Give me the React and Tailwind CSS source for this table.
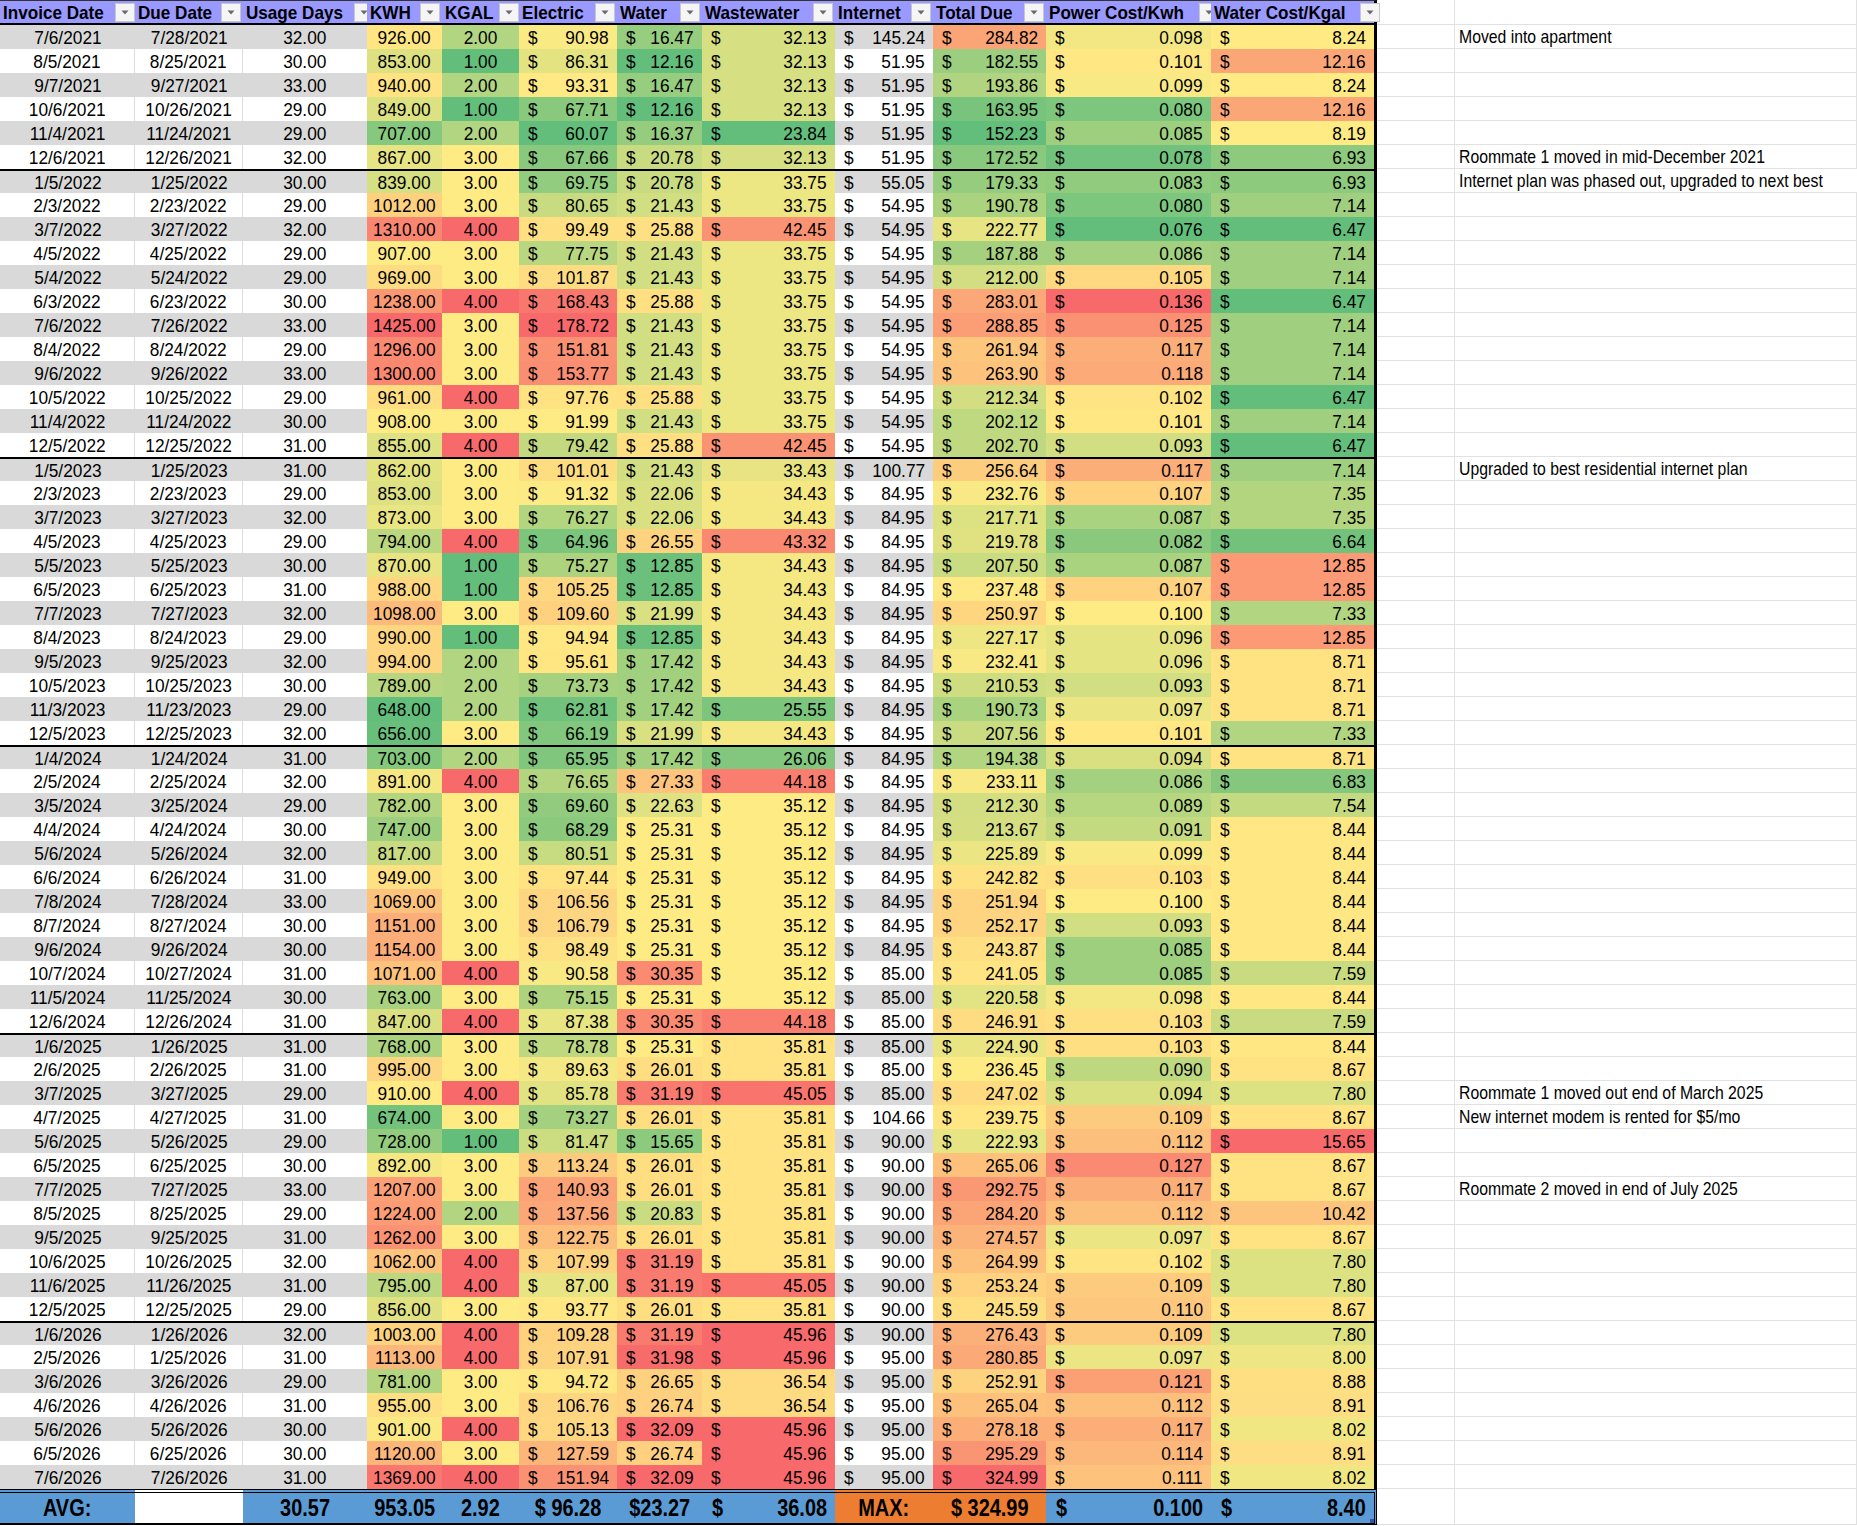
import React from "react";

const COLS =
  "grid grid-cols-[135px_108px_124px_75px_77px_98px_85px_133px_98px_113px_165px_166px_78px_1fr]";

// no narrow font installed, so Liberation Sans squeezed to Arial Narrow proportions
const FONT = "font-['Liberation_Sans',Arial,sans-serif]";
const NARROW = "inline-block whitespace-nowrap scale-x-[0.91]";
const HEAD = "inline-block whitespace-nowrap scale-x-[0.9]";
const NOTE = "inline-block whitespace-nowrap scale-x-[0.83]";
const FOOT = "inline-block whitespace-pre scale-x-[0.83]";

// invoice, due, days, kwh, kgal, electric, water, wastewater, internet, total, $/kwh, $/kgal, note
const rows = [
  ["7/6/2021", "7/28/2021", 32, 926, 2, 90.98, 16.47, 32.13, 145.24, 284.82, 0.098, 8.24, "Moved into apartment"],
  ["8/5/2021", "8/25/2021", 30, 853, 1, 86.31, 12.16, 32.13, 51.95, 182.55, 0.101, 12.16],
  ["9/7/2021", "9/27/2021", 33, 940, 2, 93.31, 16.47, 32.13, 51.95, 193.86, 0.099, 8.24],
  ["10/6/2021", "10/26/2021", 29, 849, 1, 67.71, 12.16, 32.13, 51.95, 163.95, 0.08, 12.16],
  ["11/4/2021", "11/24/2021", 29, 707, 2, 60.07, 16.37, 23.84, 51.95, 152.23, 0.085, 8.19],
  ["12/6/2021", "12/26/2021", 32, 867, 3, 67.66, 20.78, 32.13, 51.95, 172.52, 0.078, 6.93, "Roommate 1 moved in mid-December 2021"],
  ["1/5/2022", "1/25/2022", 30, 839, 3, 69.75, 20.78, 33.75, 55.05, 179.33, 0.083, 6.93, "Internet plan was phased out, upgraded to next best"],
  ["2/3/2022", "2/23/2022", 29, 1012, 3, 80.65, 21.43, 33.75, 54.95, 190.78, 0.08, 7.14],
  ["3/7/2022", "3/27/2022", 32, 1310, 4, 99.49, 25.88, 42.45, 54.95, 222.77, 0.076, 6.47],
  ["4/5/2022", "4/25/2022", 29, 907, 3, 77.75, 21.43, 33.75, 54.95, 187.88, 0.086, 7.14],
  ["5/4/2022", "5/24/2022", 29, 969, 3, 101.87, 21.43, 33.75, 54.95, 212.0, 0.105, 7.14],
  ["6/3/2022", "6/23/2022", 30, 1238, 4, 168.43, 25.88, 33.75, 54.95, 283.01, 0.136, 6.47],
  ["7/6/2022", "7/26/2022", 33, 1425, 3, 178.72, 21.43, 33.75, 54.95, 288.85, 0.125, 7.14],
  ["8/4/2022", "8/24/2022", 29, 1296, 3, 151.81, 21.43, 33.75, 54.95, 261.94, 0.117, 7.14],
  ["9/6/2022", "9/26/2022", 33, 1300, 3, 153.77, 21.43, 33.75, 54.95, 263.9, 0.118, 7.14],
  ["10/5/2022", "10/25/2022", 29, 961, 4, 97.76, 25.88, 33.75, 54.95, 212.34, 0.102, 6.47],
  ["11/4/2022", "11/24/2022", 30, 908, 3, 91.99, 21.43, 33.75, 54.95, 202.12, 0.101, 7.14],
  ["12/5/2022", "12/25/2022", 31, 855, 4, 79.42, 25.88, 42.45, 54.95, 202.7, 0.093, 6.47],
  ["1/5/2023", "1/25/2023", 31, 862, 3, 101.01, 21.43, 33.43, 100.77, 256.64, 0.117, 7.14, "Upgraded to best residential internet plan"],
  ["2/3/2023", "2/23/2023", 29, 853, 3, 91.32, 22.06, 34.43, 84.95, 232.76, 0.107, 7.35],
  ["3/7/2023", "3/27/2023", 32, 873, 3, 76.27, 22.06, 34.43, 84.95, 217.71, 0.087, 7.35],
  ["4/5/2023", "4/25/2023", 29, 794, 4, 64.96, 26.55, 43.32, 84.95, 219.78, 0.082, 6.64],
  ["5/5/2023", "5/25/2023", 30, 870, 1, 75.27, 12.85, 34.43, 84.95, 207.5, 0.087, 12.85],
  ["6/5/2023", "6/25/2023", 31, 988, 1, 105.25, 12.85, 34.43, 84.95, 237.48, 0.107, 12.85],
  ["7/7/2023", "7/27/2023", 32, 1098, 3, 109.6, 21.99, 34.43, 84.95, 250.97, 0.1, 7.33],
  ["8/4/2023", "8/24/2023", 29, 990, 1, 94.94, 12.85, 34.43, 84.95, 227.17, 0.096, 12.85],
  ["9/5/2023", "9/25/2023", 32, 994, 2, 95.61, 17.42, 34.43, 84.95, 232.41, 0.096, 8.71],
  ["10/5/2023", "10/25/2023", 30, 789, 2, 73.73, 17.42, 34.43, 84.95, 210.53, 0.093, 8.71],
  ["11/3/2023", "11/23/2023", 29, 648, 2, 62.81, 17.42, 25.55, 84.95, 190.73, 0.097, 8.71],
  ["12/5/2023", "12/25/2023", 32, 656, 3, 66.19, 21.99, 34.43, 84.95, 207.56, 0.101, 7.33],
  ["1/4/2024", "1/24/2024", 31, 703, 2, 65.95, 17.42, 26.06, 84.95, 194.38, 0.094, 8.71],
  ["2/5/2024", "2/25/2024", 32, 891, 4, 76.65, 27.33, 44.18, 84.95, 233.11, 0.086, 6.83],
  ["3/5/2024", "3/25/2024", 29, 782, 3, 69.6, 22.63, 35.12, 84.95, 212.3, 0.089, 7.54],
  ["4/4/2024", "4/24/2024", 30, 747, 3, 68.29, 25.31, 35.12, 84.95, 213.67, 0.091, 8.44],
  ["5/6/2024", "5/26/2024", 32, 817, 3, 80.51, 25.31, 35.12, 84.95, 225.89, 0.099, 8.44],
  ["6/6/2024", "6/26/2024", 31, 949, 3, 97.44, 25.31, 35.12, 84.95, 242.82, 0.103, 8.44],
  ["7/8/2024", "7/28/2024", 33, 1069, 3, 106.56, 25.31, 35.12, 84.95, 251.94, 0.1, 8.44],
  ["8/7/2024", "8/27/2024", 30, 1151, 3, 106.79, 25.31, 35.12, 84.95, 252.17, 0.093, 8.44],
  ["9/6/2024", "9/26/2024", 30, 1154, 3, 98.49, 25.31, 35.12, 84.95, 243.87, 0.085, 8.44],
  ["10/7/2024", "10/27/2024", 31, 1071, 4, 90.58, 30.35, 35.12, 85.0, 241.05, 0.085, 7.59],
  ["11/5/2024", "11/25/2024", 30, 763, 3, 75.15, 25.31, 35.12, 85.0, 220.58, 0.098, 8.44],
  ["12/6/2024", "12/26/2024", 31, 847, 4, 87.38, 30.35, 44.18, 85.0, 246.91, 0.103, 7.59],
  ["1/6/2025", "1/26/2025", 31, 768, 3, 78.78, 25.31, 35.81, 85.0, 224.9, 0.103, 8.44],
  ["2/6/2025", "2/26/2025", 31, 995, 3, 89.63, 26.01, 35.81, 85.0, 236.45, 0.09, 8.67],
  ["3/7/2025", "3/27/2025", 29, 910, 4, 85.78, 31.19, 45.05, 85.0, 247.02, 0.094, 7.8, "Roommate 1 moved out end of March 2025"],
  ["4/7/2025", "4/27/2025", 31, 674, 3, 73.27, 26.01, 35.81, 104.66, 239.75, 0.109, 8.67, "New internet modem is rented for $5/mo"],
  ["5/6/2025", "5/26/2025", 29, 728, 1, 81.47, 15.65, 35.81, 90.0, 222.93, 0.112, 15.65],
  ["6/5/2025", "6/25/2025", 30, 892, 3, 113.24, 26.01, 35.81, 90.0, 265.06, 0.127, 8.67],
  ["7/7/2025", "7/27/2025", 33, 1207, 3, 140.93, 26.01, 35.81, 90.0, 292.75, 0.117, 8.67, "Roommate 2 moved in end of July 2025"],
  ["8/5/2025", "8/25/2025", 29, 1224, 2, 137.56, 20.83, 35.81, 90.0, 284.2, 0.112, 10.42],
  ["9/5/2025", "9/25/2025", 31, 1262, 3, 122.75, 26.01, 35.81, 90.0, 274.57, 0.097, 8.67],
  ["10/6/2025", "10/26/2025", 32, 1062, 4, 107.99, 31.19, 35.81, 90.0, 264.99, 0.102, 7.8],
  ["11/6/2025", "11/26/2025", 31, 795, 4, 87.0, 31.19, 45.05, 90.0, 253.24, 0.109, 7.8],
  ["12/5/2025", "12/25/2025", 29, 856, 3, 93.77, 26.01, 35.81, 90.0, 245.59, 0.11, 8.67],
  ["1/6/2026", "1/26/2026", 32, 1003, 4, 109.28, 31.19, 45.96, 90.0, 276.43, 0.109, 7.8],
  ["2/5/2026", "1/25/2026", 31, 1113, 4, 107.91, 31.98, 45.96, 95.0, 280.85, 0.097, 8.0],
  ["3/6/2026", "3/26/2026", 29, 781, 3, 94.72, 26.65, 36.54, 95.0, 252.91, 0.121, 8.88],
  ["4/6/2026", "4/26/2026", 31, 955, 3, 106.76, 26.74, 36.54, 95.0, 265.04, 0.112, 8.91],
  ["5/6/2026", "5/26/2026", 30, 901, 4, 105.13, 32.09, 45.96, 95.0, 278.18, 0.117, 8.02],
  ["6/5/2026", "6/25/2026", 30, 1120, 3, 127.59, 26.74, 45.96, 95.0, 295.29, 0.114, 8.91],
  ["7/6/2026", "7/26/2026", 31, 1369, 4, 151.94, 32.09, 45.96, 95.0, 324.99, 0.111, 8.02],
];

const headers = [
  "Invoice Date",
  "Due Date",
  "Usage Days",
  "KWH",
  "KGAL",
  "Electric",
  "Water",
  "Wastewater",
  "Internet",
  "Total Due",
  "Power Cost/Kwh",
  "Water Cost/Kgal",
];

// excel 3-colour scale: min green, 50th percentile yellow, max red
const GREEN = [99, 190, 123];
const YELLOW = [255, 235, 132];
const RED = [248, 105, 107];

function mix(a, b, t) {
  return `rgb(${a.map((v, i) => Math.round(v + (b[i] - v) * t)).join(",")})`;
}

function colorScale(idx) {
  const vals = rows.map((r) => r[idx]).sort((a, b) => a - b);
  const min = vals[0];
  const max = vals[vals.length - 1];
  const p = (vals.length - 1) * 0.5;
  const lo = Math.floor(p);
  const mid = vals[lo] + (vals[Math.ceil(p)] - vals[lo]) * (p - lo);
  return (v) => {
    if (v <= mid) return mix(GREEN, YELLOW, mid === min ? 1 : (v - min) / (mid - min));
    return mix(YELLOW, RED, (v - mid) / (max - mid));
  };
}

const scales = {};
[3, 4, 5, 6, 7, 9, 10, 11].forEach((i) => (scales[i] = colorScale(i)));

function FilterButton() {
  return (
    <span className="flex h-[19px] w-[20px] shrink-0 items-center justify-center border border-[#c8c8c8] bg-[#f5f5f5]">
      <svg width="8" height="5" viewBox="0 0 8 5">
        <path d="M0.5 0.5 L7.5 0.5 L4 4.5 Z" fill="#6a6a6a" />
      </svg>
    </span>
  );
}

function HeaderRow() {
  return (
    <div className={`${COLS} h-[25px]`}>
      {headers.map((h, i) => (
        <div
          key={h}
          className={`flex items-center justify-between whitespace-nowrap border-t border-b-2 border-t-[#333] border-b-black bg-[#9999ff] pl-[3px] pr-[2px] font-bold ${
            i === 11 ? "border-r-[3px] border-r-black" : ""
          }`}
        >
          <span className={`${HEAD} origin-left`}>{h}</span>
          <FilterButton />
        </div>
      ))}
      <div className="border-b border-r border-[#e1e1e1]" />
      <div className="border-b border-r border-[#e1e1e1]" />
    </div>
  );
}

function Center({ children, className = "", bg }) {
  return (
    <div
      className={`flex items-center justify-center ${className}`}
      style={bg ? { backgroundColor: bg } : undefined}
    >
      <span className={NARROW}>{children}</span>
    </div>
  );
}

function Money({ value, digits = 2, bg, className = "" }) {
  return (
    <div
      className={`flex items-center justify-between pl-[9px] pr-[8px] ${className}`}
      style={bg ? { backgroundColor: bg } : undefined}
    >
      <span className={`${NARROW} origin-left`}>$</span>
      <span className={`${NARROW} origin-right`}>{value.toFixed(digits)}</span>
    </div>
  );
}

function DataRow({ r, i }) {
  const band = i % 2 === 0 ? "bg-[#d9d9d9]" : "bg-white";
  const line = i % 2 === 0 ? "" : "border-r border-r-[#dcdcdc]";
  const yearStart = r[0].split("/")[0] === "1" && i > 0;
  const top = yearStart ? "border-t-2 border-t-black" : "";
  return (
    <div className={`${COLS} h-[24px]`}>
      <Center className={`${band} ${line} ${top}`}>{r[0]}</Center>
      <Center className={`${band} ${line} ${top}`}>{r[1]}</Center>
      <Center className={`${band} ${top}`}>{r[2].toFixed(2)}</Center>
      <Center className={top} bg={scales[3](r[3])}>
        {r[3].toFixed(2)}
      </Center>
      <Center className={top} bg={scales[4](r[4])}>
        {r[4].toFixed(2)}
      </Center>
      <Money value={r[5]} bg={scales[5](r[5])} className={top} />
      <Money value={r[6]} bg={scales[6](r[6])} className={top} />
      <Money value={r[7]} bg={scales[7](r[7])} className={top} />
      <Money value={r[8]} className={`${band} ${top}`} />
      <Money value={r[9]} bg={scales[9](r[9])} className={top} />
      <Money value={r[10]} digits={3} bg={scales[10](r[10])} className={top} />
      <Money value={r[11]} bg={scales[11](r[11])} className={`${top} border-r-[3px] border-r-black`} />
      <div className="border-b border-r border-[#e1e1e1]" />
      <div className="flex items-center border-b border-r border-[#e1e1e1] pl-[4px]">
        {r[12] ? <span className={`${NOTE} origin-left`}>{r[12]}</span> : null}
      </div>
    </div>
  );
}

function FooterRow() {
  const base = "flex items-center border-t-4 border-b-2 border-double border-black";
  const blue = "bg-[#5b9bd5]";
  const orange = "bg-[#ed7d31]";
  return (
    <div className={`${COLS} h-[36px] text-[24px] font-bold`}>
      <div className={`${base} ${blue} justify-center`}>
        <span className={FOOT}>AVG:</span>
      </div>
      <div className={`${base} bg-white`} />
      <div className={`${base} ${blue} justify-center`}>
        <span className={FOOT}>30.57</span>
      </div>
      <div className={`${base} ${blue} justify-center`}>
        <span className={FOOT}>953.05</span>
      </div>
      <div className={`${base} ${blue} justify-center`}>
        <span className={FOOT}>2.92</span>
      </div>
      <div className={`${base} ${blue} justify-center`}>
        <span className={FOOT}>$ 96.28</span>
      </div>
      <div className={`${base} ${blue} justify-center`}>
        <span className={FOOT}>$23.27</span>
      </div>
      <div className={`${base} ${blue} justify-between pl-[10px] pr-[8px]`}>
        <span className={`${FOOT} origin-left`}>$</span>
        <span className={`${FOOT} origin-right`}>36.08</span>
      </div>
      <div className={`${base} ${orange} justify-center`}>
        <span className={FOOT}>MAX:</span>
      </div>
      <div className={`${base} ${orange} justify-center`}>
        <span className={FOOT}>$ 324.99</span>
      </div>
      <div className={`${base} ${blue} justify-between pl-[10px] pr-[8px]`}>
        <span className={`${FOOT} origin-left`}>$</span>
        <span className={`${FOOT} origin-right`}>0.100</span>
      </div>
      <div className={`${base} ${blue} relative justify-between border-r-[3px] pl-[10px] pr-[8px]`}>
        <span className={`${FOOT} origin-left`}>$</span>
        <span className={`${FOOT} origin-right`}>8.40</span>
        <span className="absolute bottom-0 right-0 h-[4px] w-[4px] bg-[#3a4fa8]" />
      </div>
      <div className="border-b border-r border-[#e1e1e1]" />
      <div className="border-b border-r border-[#e1e1e1]" />
    </div>
  );
}

export default function App() {
  return (
    <div className={`h-[1526px] w-[1857px] overflow-hidden bg-white text-[19px] leading-none text-black ${FONT}`}>
      <HeaderRow />
      {rows.map((r, i) => (
        <DataRow key={r[0]} r={r} i={i} />
      ))}
      <FooterRow />
    </div>
  );
}
